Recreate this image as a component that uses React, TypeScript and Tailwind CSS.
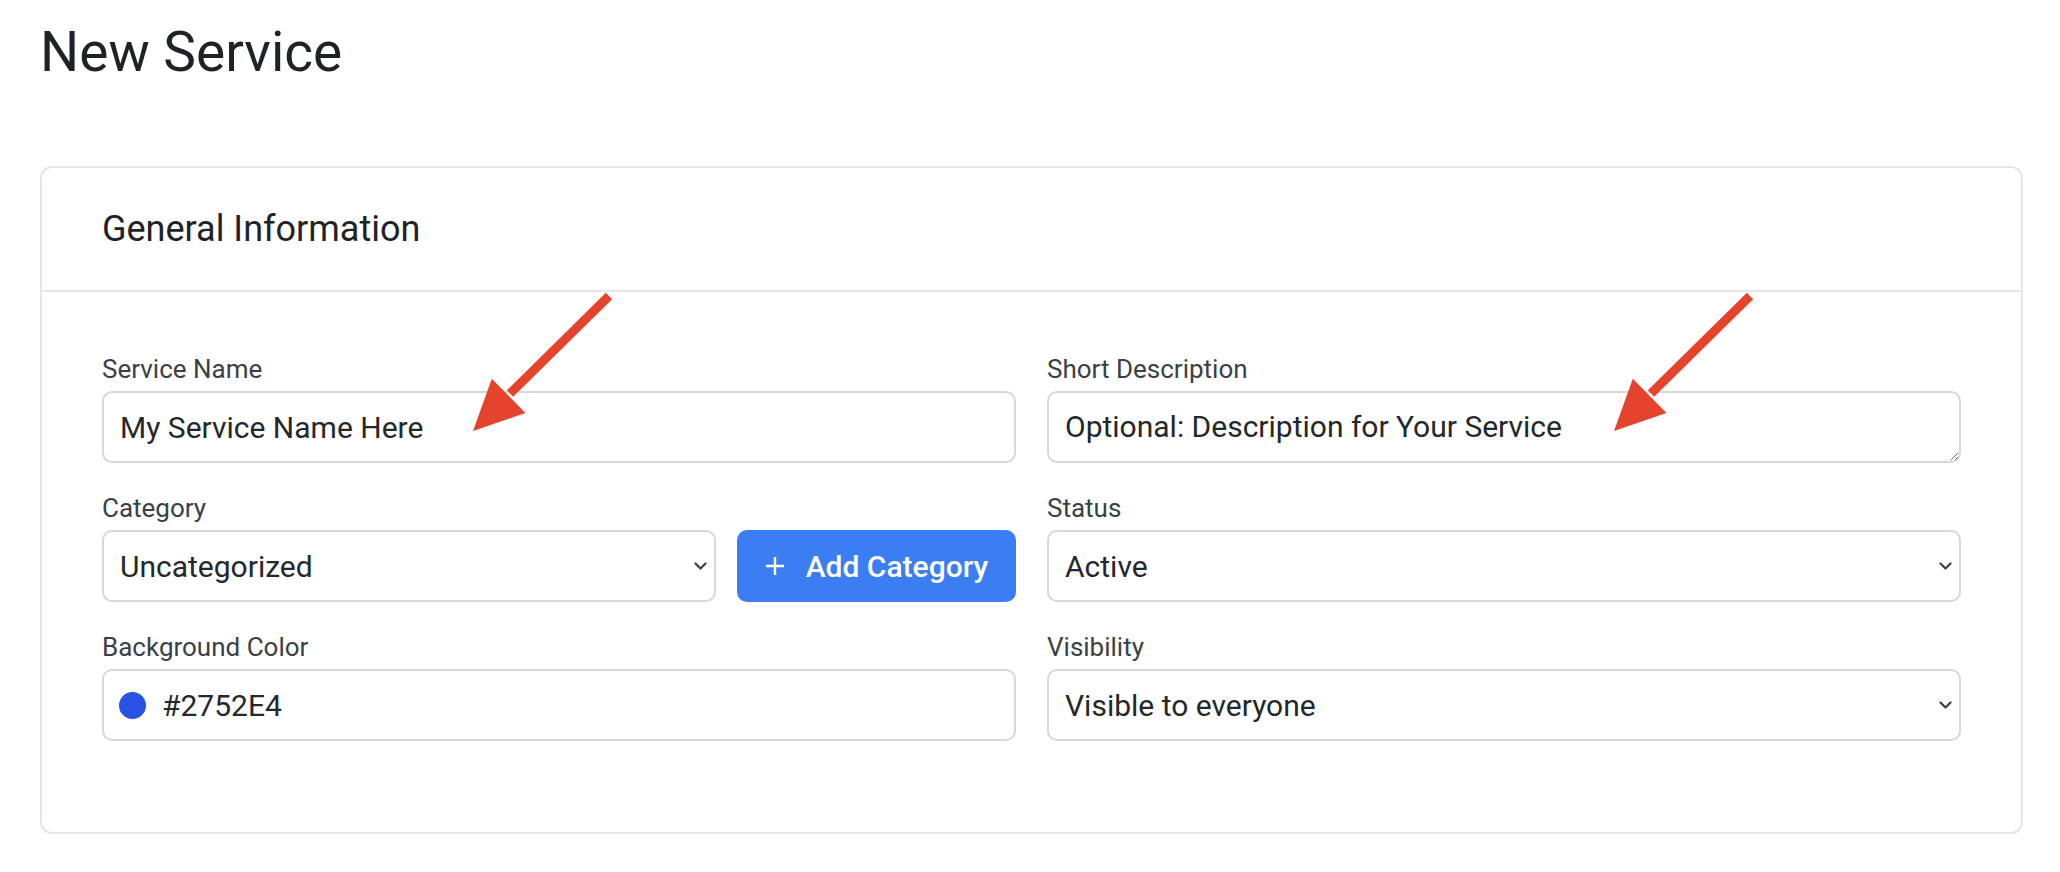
import { ReactNode } from 'react'

const font = "font-['Roboto','Noto_Sans',sans-serif]"

function Label({ children }: { children: ReactNode }) {
  return <div className="mb-[7px] text-[26px] leading-[30px] text-[#3b4046]">{children}</div>
}

function Chevron() {
  return (
    <svg
      className="pointer-events-none absolute right-[9px] top-1/2 -translate-y-1/2"
      width="13"
      height="9"
      viewBox="0 0 13 9"
      fill="none"
    >
      <path d="M1.5 2l5 5 5-5" stroke="#3b4046" strokeWidth="2.2" strokeLinecap="round" strokeLinejoin="round" />
    </svg>
  )
}

function SelectBox({ value }: { value: string }) {
  return (
    <div className="relative w-full">
      <select
        defaultValue={value}
        className="h-[72px] w-full appearance-none rounded-[10px] border-2 border-[#d5d8dc] bg-white pl-[16px] pr-[40px] text-[30px] text-[#24282c] outline-none"
      >
        <option>{value}</option>
      </select>
      <Chevron />
    </div>
  )
}

// red annotation arrow: line from start to base of head, then the head
function Arrow({ dx }: { dx: number }) {
  return (
    <g transform={`translate(${dx} 0)`}>
      <line x1="609" y1="296" x2="510" y2="393.5" stroke="#e5432b" strokeWidth="9" />
      <polygon points="473,431 525.4,413 491.8,378.8" fill="#e5432b" />
    </g>
  )
}

export default function App() {
  return (
    <div className={`relative h-[872px] w-[2060px] overflow-hidden bg-white ${font}`}>
      <div className="pl-[40px] pr-[37px] pt-[20px]">
        <h1 className="text-[55px] font-normal leading-[64px] text-[#1f2328]">New Service</h1>

        <div className="mt-[82px] rounded-[12px] border-2 border-[#e4e6e9] bg-white">
          <div className="flex h-[124px] items-center border-b-2 border-[#e4e6e9] px-[60px]">
            <h2 className="text-[36px] leading-[44px] text-[#1f2328]">General Information</h2>
          </div>

          <div className="grid grid-cols-2 gap-x-[31px] gap-y-[30px] px-[60px] pb-[91px] pt-[62px]">
            <div>
              <Label>Service Name</Label>
              <input
                readOnly
                defaultValue="My Service Name Here"
                className="h-[72px] w-full rounded-[10px] border-2 border-[#d5d8dc] px-[16px] text-[30px] text-[#24282c] outline-none"
              />
            </div>
            <div>
              <Label>Short Description</Label>
              <textarea
                readOnly
                defaultValue="Optional: Description for Your Service"
                className="block h-[72px] w-full overflow-hidden rounded-[10px] border-2 border-[#d5d8dc] px-[16px] py-[16px] text-[30px] leading-[36px] text-[#24282c] outline-none"
              />
            </div>

            <div>
              <Label>Category</Label>
              <div className="flex gap-[21px]">
                <div className="flex-1">
                  <SelectBox value="Uncategorized" />
                </div>
                <button className="flex h-[72px] w-[279px] shrink-0 items-center justify-center gap-[21px] rounded-[10px] bg-[#3b7ef4] text-[30px] font-medium text-white">
                  <svg width="20" height="20" viewBox="0 0 20 20" fill="none">
                    <path d="M10 1v18M1 10h18" stroke="white" strokeWidth="2.4" />
                  </svg>
                  <span>Add Category</span>
                </button>
              </div>
            </div>
            <div>
              <Label>Status</Label>
              <SelectBox value="Active" />
            </div>

            <div>
              <Label>Background Color</Label>
              <div className="flex h-[72px] w-full items-center gap-[16px] rounded-[10px] border-2 border-[#d5d8dc] pl-[15px] text-[30px] text-[#24282c]">
                <span className="h-[27px] w-[27px] shrink-0 rounded-full bg-[#2752E4]" />
                <span>#2752E4</span>
              </div>
            </div>
            <div>
              <Label>Visibility</Label>
              <SelectBox value="Visible to everyone" />
            </div>
          </div>
        </div>
      </div>

      <svg
        className="pointer-events-none absolute left-0 top-0"
        width="2060"
        height="872"
        viewBox="0 0 2060 872"
      >
        <Arrow dx={0} />
        <Arrow dx={1141} />
      </svg>
    </div>
  )
}
